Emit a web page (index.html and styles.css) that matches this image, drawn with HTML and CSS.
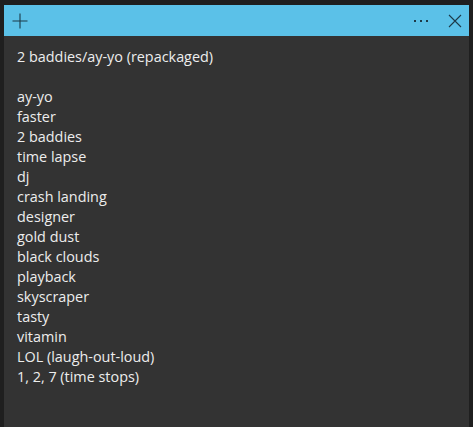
FILE: index.html
```html
<!DOCTYPE html>
<html lang="en">
<head>
	<meta charset="UTF-8">
	<title>Tracklist</title>
	<link rel="stylesheet" href="styles.css">
</head>
<body>
	<div class="window">
		<div class="titlebar">
			<div class="btn add">
				<svg width="16" height="16" viewBox="0 0 16 16"><path d="M8 0.5V15.5M0.5 8H15.5" stroke="#1d3a48" stroke-width="1.1" fill="none"/></svg>
			</div>
			<div class="spacer"></div>
			<div class="btn more">
				<svg width="16" height="4" viewBox="0 0 16 4"><rect x="1" y="1" width="2" height="2" fill="#1d3a48"/><rect x="7" y="1" width="2" height="2" fill="#1d3a48"/><rect x="13" y="1" width="2" height="2" fill="#1d3a48"/></svg>
			</div>
			<div class="btn close">
				<svg width="14" height="14" viewBox="0 0 14 14"><path d="M1 1L13 13M13 1L1 13" stroke="#1d3a48" stroke-width="1.1" fill="none"/></svg>
			</div>
		</div>
		<div class="content">
			<p>2 baddies/ay-yo (repackaged)</p>
			<p>&nbsp;</p>
			<p>ay-yo</p>
			<p>faster</p>
			<p>2 baddies</p>
			<p>time lapse</p>
			<p>dj</p>
			<p>crash landing</p>
			<p>designer</p>
			<p>gold dust</p>
			<p>black clouds</p>
			<p>playback</p>
			<p>skyscraper</p>
			<p>tasty</p>
			<p>vitamin</p>
			<p>LOL (laugh-out-loud)</p>
			<p>1, 2, 7 (time stops)</p>
		</div>
	</div>
</body>
</html>
```

FILE: styles.css
```css
html, body {
	height: 100%;
}
body {
	margin: 0;
	background: #1f1f1f;
	font-family: "Open Sans", "Noto Sans", sans-serif;
}
.window {
	margin: 0 4px 0 4px;
	padding-top: 5px;
	height: 100%;
	box-sizing: border-box;
	display: flex;
	flex-direction: column;
}
.titlebar {
	height: 31px;
	background: #5bc1e8;
	display: flex;
	align-items: center;
}
.titlebar .spacer {
	flex: 1;
}
.btn {
	display: flex;
	align-items: center;
	justify-content: center;
}
.btn svg {
	display: block;
}
.add {
	width: 32px;
}
.more {
	width: 20px;
	margin-right: 17px;
	padding-top: 1px;
}
.close {
	width: 14px;
	margin-right: 7px;
	padding-top: 1px;
}
.content {
	flex: 1;
	background: #333333;
	padding: 11px 13px;
	color: #ededed;
	font-size: 14.4px;
	line-height: 20px;
}
.content p {
	margin: 0;
}
```
